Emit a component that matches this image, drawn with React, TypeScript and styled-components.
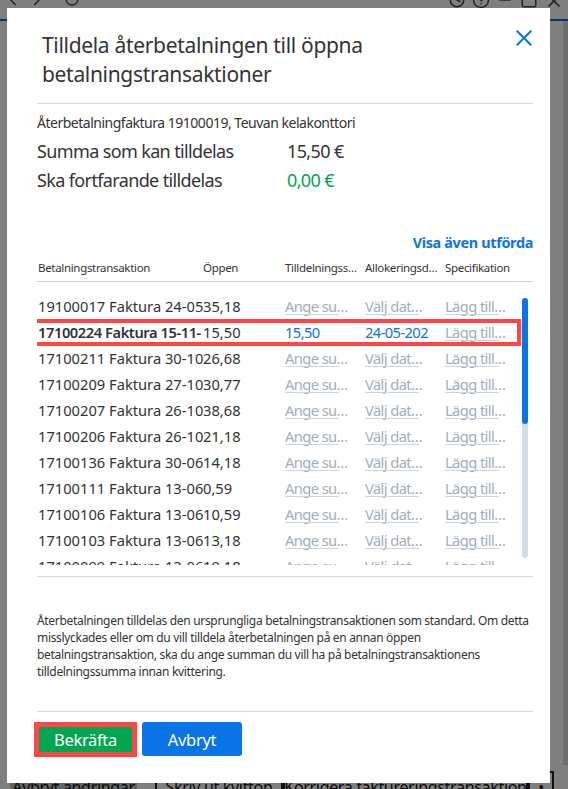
import React from 'react';
import styled, { createGlobalStyle } from 'styled-components';
import { ChevronLeft, ChevronRight, RotateCw, History, HelpCircle, Minus, Square, X } from 'lucide-react';

const GlobalStyle = createGlobalStyle`
  html, body {
    margin: 0;
    padding: 0;
  }
  body {
    font-family: "Noto Sans", "Open Sans", sans-serif;
    letter-spacing: -0.02em;
    color: #333;
  }
`;

const BLUE = '#0a74e6';
const GREEN = '#00a650';
const TEXT = '#333333';
const LINE = '#d3dce5';

/* ---------- page behind the dialog ---------- */

const Page = styled.div`
  position: relative;
  width: 568px;
  height: 789px;
  overflow: hidden;
  background: #ffffff;
  display: flex;
  flex-direction: column;
`;

const TopBar = styled.div`
  height: 19px;
  border-bottom: 2px solid #1d6fd0;
  display: flex;
  align-items: flex-start;
  padding: 0 4px;
  gap: 6px;
  color: #444;
  svg {
    margin-top: -9px;
  }
`;

const TopSpacer = styled.div`
  flex: 1;
`;

const Main = styled.div`
  flex: 1;
  display: flex;
  justify-content: flex-end;
`;

const PageScroll = styled.div`
  width: 5px;
  background: #dcdcdc;
`;

const BottomBar = styled.div`
  height: 24px;
  display: flex;
  align-items: flex-start;
  padding-left: 10px;
`;

const BgButton = styled.div<{ $dark?: boolean; $w: number }>`
  width: ${({ $w }) => $w}px;
  height: 32px;
  margin-top: 6px;
  box-sizing: border-box;
  display: flex;
  align-items: center;
  justify-content: center;
  font-size: 16px;
  white-space: nowrap;
  overflow: hidden;
  color: #111;
  background: ${({ $dark }) => ($dark ? '#c4c4c4' : '#ffffff')};
  border: ${({ $dark }) => ($dark ? 'none' : '2px solid #222')};
  margin-right: ${({ $dark }) => ($dark ? '18px' : '0')};
`;

const Overlay = styled.div`
  position: absolute;
  inset: 0;
  background: rgba(0, 0, 0, 0.5);
`;

/* ---------- dialog ---------- */

const Modal = styled.div`
  position: absolute;
  left: 7px;
  top: 8px;
  width: 543px;
  height: 775px;
  box-sizing: border-box;
  background: #ffffff;
  padding: 23px 17px 26px 30px;
  display: flex;
  flex-direction: column;
  color: ${TEXT};
`;

const Header = styled.div`
  display: flex;
  justify-content: space-between;
  align-items: flex-start;
  padding: 0 1px 14px 5px;
  border-bottom: 1px solid ${LINE};
`;

const Title = styled.h1`
  margin: 0;
  max-width: 400px;
  font-size: 21px;
  line-height: 29px;
  font-weight: 400;
  color: ${TEXT};
`;

const CloseButton = styled.button`
  border: none;
  background: none;
  padding: 0;
  margin-top: -1px;
  cursor: pointer;
  display: flex;
`;

const InvoiceLine = styled.div`
  margin-top: 9px;
  font-size: 14px;
  letter-spacing: -0.035em;
  line-height: 20px;
`;

const Sums = styled.div`
  display: grid;
  grid-template-columns: 250px auto;
  font-size: 18px;
  letter-spacing: -0.035em;
  line-height: 29px;
  margin-top: 4px;
`;

const SumValue = styled.span<{ $green?: boolean }>`
  color: ${({ $green }) => ($green ? GREEN : TEXT)};
`;

const ShowAll = styled.a`
  align-self: flex-end;
  margin-top: 38px;
  font-size: 14.4px;
  line-height: 20px;
  font-weight: 700;
  color: ${BLUE};
  cursor: pointer;
`;

const columns = '165px 82px 80px 80px 1fr';

const TableHead = styled.div`
  display: grid;
  grid-template-columns: ${columns};
  margin-top: 7px;
  padding: 0 0 5px 1px;
  border-bottom: 1px solid #c5d3e0;
  font-size: 11.5px;
  line-height: 16px;
  span {
    white-space: nowrap;
    overflow: hidden;
    text-overflow: ellipsis;
    padding-right: 2px;
  }
`;

const ScrollSection = styled.div`
  padding-bottom: 11px;
  border-bottom: 1px solid ${LINE};
`;

const Viewport = styled.div`
  position: relative;
  height: 283px;
  box-sizing: border-box;
  padding-top: 11px;
  overflow: hidden;
`;

const Track = styled.div`
  position: absolute;
  right: 5px;
  top: 16px;
  width: 6px;
  height: 260px;
  border-radius: 3px;
  background: #d3dde7;
`;

const Thumb = styled.div`
  height: 126px;
  border-radius: 3px;
  background: ${BLUE};
`;

const Row = styled.div<{ $marked?: boolean }>`
  position: relative;
  display: grid;
  grid-template-columns: ${columns};
  align-items: center;
  height: 26px;
  padding-left: 1px;
  font-size: 14.7px;
  letter-spacing: 0;
  &::after {
    content: '';
    display: ${({ $marked }) => ($marked ? 'block' : 'none')};
    position: absolute;
    left: -8px;
    right: 12px;
    top: 0;
    bottom: -1px;
    border: 4px solid #ff4646;
  }
`;

const TxCell = styled.span<{ $bold?: boolean }>`
  white-space: nowrap;
  overflow: hidden;
  font-weight: ${({ $bold }) => ($bold ? 600 : 400)};
  letter-spacing: ${({ $bold }) => ($bold ? '-0.03em' : '0')};
`;

const Field = styled.span<{ $filled?: boolean }>`
  position: relative;
  width: 64px;
  white-space: nowrap;
  overflow: hidden;
  letter-spacing: -0.04em;
  text-overflow: ${({ $filled }) => ($filled ? 'clip' : 'ellipsis')};
  color: ${({ $filled }) => ($filled ? BLUE : '#a3aebb')};
  &::after {
    content: '';
    display: ${({ $filled }) => ($filled ? 'none' : 'block')};
    position: absolute;
    left: 0;
    bottom: 1px;
    width: 54px;
    height: 1px;
    background: #cbd5df;
  }
`;

const Note = styled.p`
  margin: 35px 0 0;
  font-size: 12px;
  line-height: 17px;
`;

const Footer = styled.div`
  margin-top: auto;
  padding-top: 10px;
  border-top: 1px solid ${LINE};
  display: flex;
  align-items: flex-start;
  gap: 5px;
`;

const Button = styled.button<{ $variant: 'confirm' | 'cancel' }>`
  height: ${({ $variant }) => ($variant === 'confirm' ? '35px' : '34px')};
  width: ${({ $variant }) => ($variant === 'confirm' ? '103px' : '100px')};
  margin-left: ${({ $variant }) => ($variant === 'confirm' ? '-3px' : '0')};
  box-sizing: border-box;
  border: ${({ $variant }) => ($variant === 'confirm' ? '5px solid #ff4646' : 'none')};
  border-radius: ${({ $variant }) => ($variant === 'confirm' ? '0' : '3px')};
  background: ${({ $variant }) => ($variant === 'confirm' ? GREEN : BLUE)};
  color: #ffffff;
  font-family: inherit;
  letter-spacing: inherit;
  font-size: 16.5px;
  padding: 0;
  cursor: pointer;
`;

type Tx = { id: string; open: string; amount?: string; date?: string; marked?: boolean };

const rows: Tx[] = [
  { id: '19100017 Faktura 24-05', open: '35,18' },
  { id: '17100224 Faktura 15-11-', open: '15,50', amount: '15,50', date: '24-05-202', marked: true },
  { id: '17100211 Faktura 30-10', open: '26,68' },
  { id: '17100209 Faktura 27-10', open: '30,77' },
  { id: '17100207 Faktura 26-10', open: '38,68' },
  { id: '17100206 Faktura 26-10', open: '21,18' },
  { id: '17100136 Faktura 30-06', open: '14,18' },
  { id: '17100111 Faktura 13-06', open: '0,59' },
  { id: '17100106 Faktura 13-06', open: '10,59' },
  { id: '17100103 Faktura 13-06', open: '13,18' },
  { id: '17100099 Faktura 13-06', open: '19,18' },
];

const CloseIcon = () => (
  <svg width="16" height="16" viewBox="0 0 16 16" fill="none">
    <path d="M1.5 1.5 L14.5 14.5 M14.5 1.5 L1.5 14.5" stroke={BLUE} strokeWidth="2" strokeLinecap="square" />
  </svg>
);

export default function App() {
  return (
    <Page>
      <GlobalStyle />
      <TopBar>
        <ChevronLeft size={18} />
        <ChevronRight size={18} />
        <RotateCw size={16} style={{ marginLeft: 12 }} />
        <TopSpacer />
        <History size={18} />
        <HelpCircle size={18} />
        <Minus size={18} />
        <Square size={18} />
        <X size={20} />
      </TopBar>
      <Main>
        <PageScroll />
      </Main>
      <BottomBar>
        <BgButton $dark $w={127}>Avbryt ändringar</BgButton>
        <BgButton $w={128}>Skriv ut kvitton</BgButton>
        <BgButton $w={245}>Korrigera faktureringstransaktion</BgButton>
        <BgButton $w={26}>•</BgButton>
      </BottomBar>
      <Overlay />

      <Modal role="dialog">
        <Header>
          <Title>Tilldela återbetalningen till öppna betalningstransaktioner</Title>
          <CloseButton aria-label="Stäng">
            <CloseIcon />
          </CloseButton>
        </Header>

        <InvoiceLine>Återbetalningfaktura 19100019, Teuvan kelakonttori</InvoiceLine>
        <Sums>
          <span>Summa som kan tilldelas</span>
          <SumValue>15,50 €</SumValue>
          <span>Ska fortfarande tilldelas</span>
          <SumValue $green>0,00 €</SumValue>
        </Sums>

        <ShowAll>Visa även utförda</ShowAll>

        <TableHead>
          <span>Betalningstransaktion</span>
          <span>Öppen</span>
          <span>Tilldelningssumma</span>
          <span>Allokeringsdatum</span>
          <span>Specifikation</span>
        </TableHead>

        <ScrollSection>
          <Viewport>
            {rows.map((r) => (
              <Row key={r.id} $marked={r.marked}>
                <TxCell $bold={r.marked}>{r.id}</TxCell>
                <span>{r.open}</span>
                <Field $filled={!!r.amount}>{r.amount ?? 'Ange summa'}</Field>
                <Field $filled={!!r.date}>{r.date ?? 'Välj datum'}</Field>
                <Field>Lägg till specifikation</Field>
              </Row>
            ))}
            <Track>
              <Thumb />
            </Track>
          </Viewport>
        </ScrollSection>

        <Note>
          Återbetalningen tilldelas den ursprungliga betalningstransaktionen som standard. Om detta
          misslyckades eller om du vill tilldela återbetalningen på en annan öppen
          betalningstransaktion, ska du ange summan du vill ha på betalningstransaktionens
          tilldelningssumma innan kvittering.
        </Note>

        <Footer>
          <Button $variant="confirm">Bekräfta</Button>
          <Button $variant="cancel">Avbryt</Button>
        </Footer>
      </Modal>
    </Page>
  );
}
